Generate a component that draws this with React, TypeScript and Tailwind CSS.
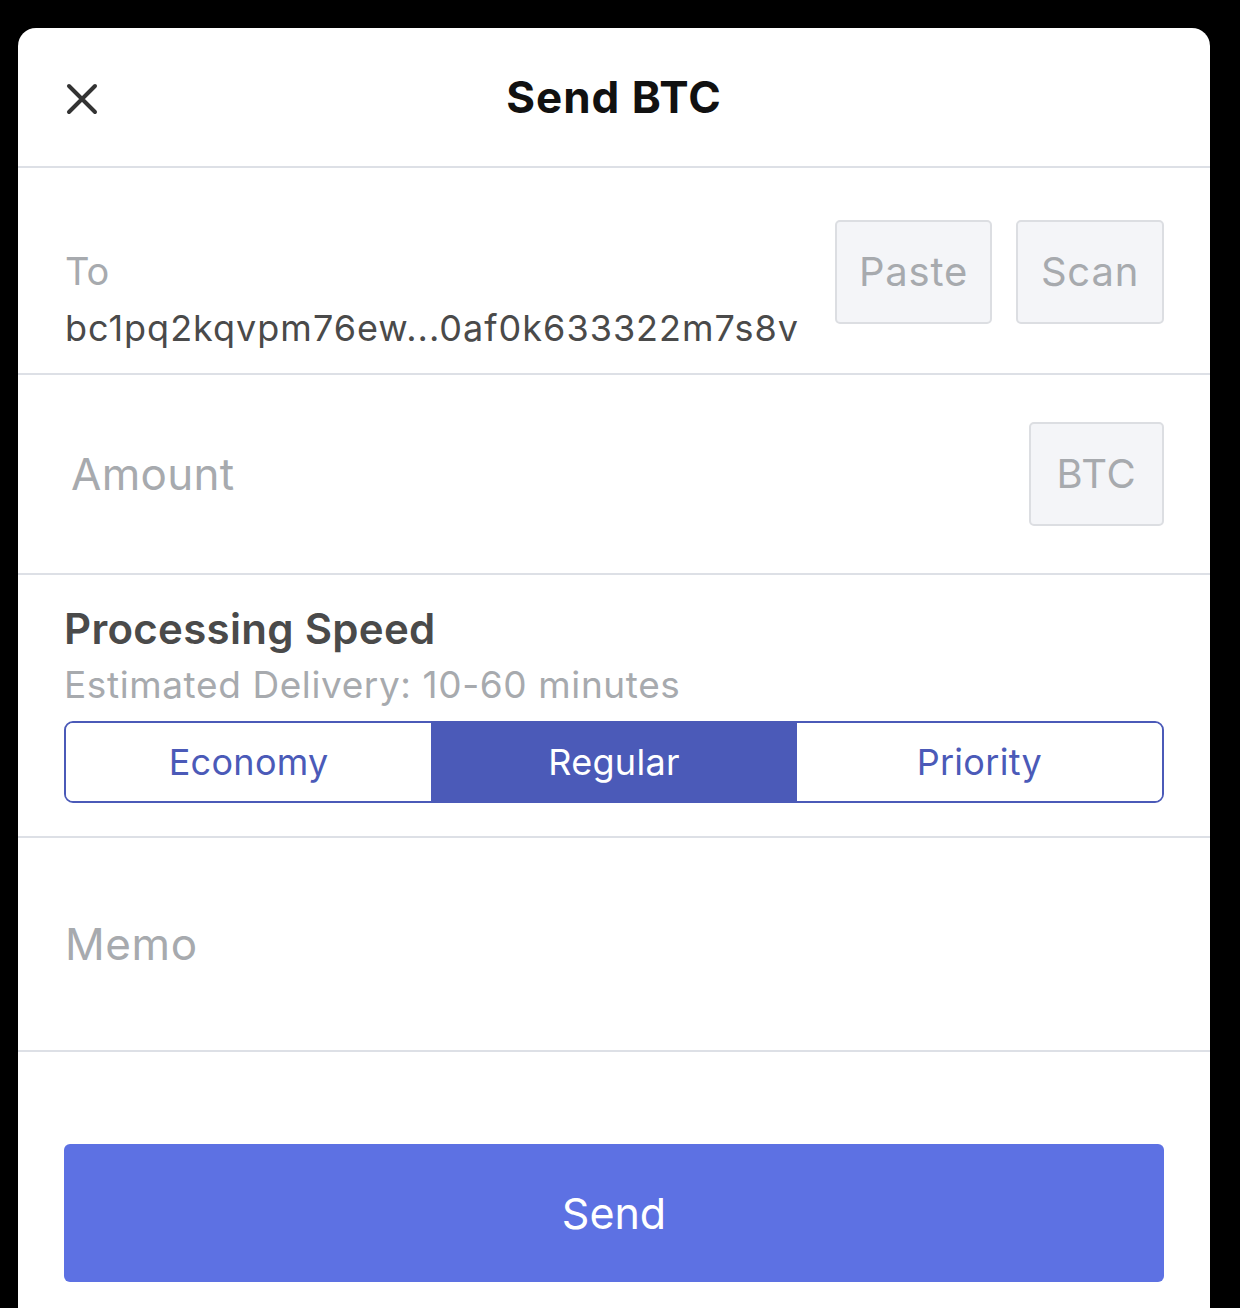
import React from "react";

const font = { fontFamily: "Inter, 'Noto Sans', sans-serif" };

const GrayButton = ({ label, w }: { label: string; w: string }) => (
  <button
    type="button"
    className={`${w} h-[104px] rounded-[5px] border-2 border-[#dcdee2] bg-[#f4f5f8] text-[40px] tracking-[0.8px] text-[#a7aaae]`}
  >
    {label}
  </button>
);

const speeds = ["Economy", "Regular", "Priority"];

export default function App() {
  const selected = "Regular";
  return (
    <div className="min-h-[1308px] bg-black pt-[28px] pl-[18px] pr-[30px]" style={font}>
      <div className="min-h-[1280px] rounded-t-[18px] bg-white">
        {/* Header */}
        <div className="relative flex h-[140px] items-center justify-center border-b-2 border-[#dde0e6]">
          <button type="button" className="absolute left-[48px] top-[55px] text-[#333]">
            <svg width="32" height="32" viewBox="0 0 32 32" fill="none" stroke="currentColor" strokeWidth="4" strokeLinecap="round">
              <path d="M3 3L29 29M29 3L3 29" />
            </svg>
          </button>
          <h1 className="text-[44px] font-bold tracking-[1px] text-[#111]">Send BTC</h1>
        </div>

        {/* To */}
        <div className="flex h-[207px] justify-between border-b-2 border-[#dde0e6] pl-[47px] pr-[46px]">
          <div className="flex flex-col pt-[78px]">
            <span className="text-[38px] leading-[50px] text-[#a7aaae]">To</span>
            <span className="mt-[7px] text-[36px] leading-[50px] tracking-[1px] text-[#4a4a4a]">
              bc1pq2kqvpm76ew...0af0k633322m7s8v
            </span>
          </div>
          <div className="flex gap-[24px] pt-[52px]">
            <GrayButton label="Paste" w="w-[157px]" />
            <GrayButton label="Scan" w="w-[148px]" />
          </div>
        </div>

        {/* Amount */}
        <div className="flex h-[200px] items-center justify-between border-b-2 border-[#dde0e6] pl-[53px] pr-[46px]">
          <span className="text-[44px] tracking-[0.3px] text-[#a7aaae]">Amount</span>
          <GrayButton label="BTC" w="w-[135px]" />
        </div>

        {/* Processing speed */}
        <div className="flex h-[263px] flex-col border-b-2 border-[#dde0e6] px-[46px] pt-[26px]">
          <span className="text-[42px] font-semibold leading-[56px] tracking-[0.3px] text-[#4a4a4a]">
            Processing Speed
          </span>
          <span className="text-[37px] leading-[56px] tracking-[0.6px] text-[#a7aaae]">
            Estimated Delivery: 10-60 minutes
          </span>
          <div className="mt-[8px] flex h-[82px] overflow-hidden rounded-[9px] border-2 border-[#4b5ab8]">
            {speeds.map((s) => (
              <button
                key={s}
                type="button"
                className={`flex flex-1 items-center justify-center text-[36px] tracking-[0.3px] ${
                  s === selected ? "bg-[#4b5ab8] text-white" : "bg-white text-[#4b5ab8]"
                }`}
              >
                {s}
              </button>
            ))}
          </div>
        </div>

        {/* Memo */}
        <div className="flex h-[214px] items-center border-b-2 border-[#dde0e6] px-[47px]">
          <span className="text-[44px] tracking-[0.6px] text-[#a7aaae]">Memo</span>
        </div>

        {/* Send */}
        <div className="px-[46px] pt-[92px]">
          <button
            type="button"
            className="flex h-[138px] w-full items-center justify-center rounded-[6px] bg-[#5d71e3] text-[43px] text-white"
          >
            Send
          </button>
        </div>
      </div>
    </div>
  );
}
